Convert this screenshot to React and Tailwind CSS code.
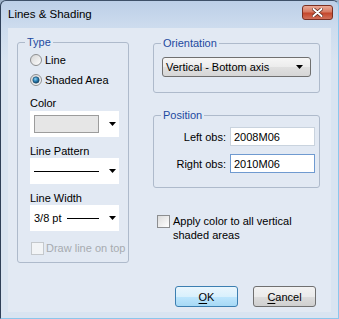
function Arrow() {
  return (
    <svg width="7" height="4" viewBox="0 0 7 4" className="shrink-0">
      <polygon points="0,0 7,0 3.5,4" fill="#000" />
    </svg>
  );
}

function Radio({ checked }) {
  return (
    <svg width="12" height="12" viewBox="0 0 12 12" className="shrink-0">
      <defs>
        <linearGradient id={checked ? 'rfa' : 'rfb'} x1="0" y1="0" x2="1" y2="1">
          <stop offset="0" stopColor="#d4d4d4" />
          <stop offset="1" stopColor="#ffffff" />
        </linearGradient>
        <radialGradient id="rdot" cx="0.4" cy="0.35" r="0.7">
          <stop offset="0" stopColor="#8fd3f5" />
          <stop offset="0.5" stopColor="#2a7fb3" />
          <stop offset="1" stopColor="#0d3e5e" />
        </radialGradient>
      </defs>
      <circle cx="6" cy="6" r="5.5" fill={checked ? 'url(#rfa)' : 'url(#rfb)'} stroke="#8c8e90" />
      {checked && <circle cx="6" cy="6" r="3.2" fill="url(#rdot)" stroke="#1d4a69" strokeWidth="0.6" />}
    </svg>
  );
}

function Check({ disabled }) {
  return (
    <div className={`h-[13px] w-[13px] shrink-0 border ${disabled ? 'border-[#c4c8cc] bg-[#f2f4f6]' : 'border-[#8c8e90] bg-[linear-gradient(135deg,#dcdcdc,#ffffff)]'}`} />
  );
}

function Group({ title, className, children }) {
  return (
    <fieldset className={`rounded-[3px] border border-[#aebacb] ${className}`}>
      <legend className="ml-[7px] px-[2px] text-[#1d4aa0]">{title}</legend>
      {children}
    </fieldset>
  );
}

function WhiteCombo({ children }) {
  return (
    <div className="flex h-[26px] w-[89px] items-center bg-white pl-[4px] pr-[3px]">
      <div className="flex flex-1 items-center">{children}</div>
      <div className="ml-[10px]">
        <Arrow />
      </div>
    </div>
  );
}

function Button({ label, first, isDefault }) {
  return (
    <button
      className={`flex h-[21px] w-[63px] items-center justify-center rounded-[3px] border ${
        isDefault
          ? 'border-[#3c7fb1] bg-[linear-gradient(#eaf6fd,#d9f0fc_50%,#bee6fd_50%,#a7d9f5)]'
          : 'border-[#707070] bg-[linear-gradient(#f2f2f2,#ebebeb_50%,#dddddd_50%,#cfcfcf)]'
      }`}
    >
      <span className="underline underline-offset-2">{first}</span>
      {label}
    </button>
  );
}

export default function App() {
  return (
    <div className="h-[319px] w-[339px] bg-[#9fb3ca] font-['Liberation_Sans',Arial,sans-serif] text-[11px] leading-[14px] text-black">
      <div className="flex h-full flex-col rounded-t-[6px] border border-b-[#8cc6ec] border-l-[#2f4058] border-r-[#8cc6ec] border-t-[#3e5068] bg-[linear-gradient(#bccfe7,#cddcee_26px,#d9e4f1_60px,#d9e4f1)]">
        {/* title bar */}
        <div className="flex h-[27px] shrink-0 items-start justify-between">
          <div className="pl-[7px] pt-[6px] text-[11.5px] leading-[15px]">Lines &amp; Shading</div>
          <div className="mr-[5px] mt-[4px] flex h-[15px] w-[31px] items-center justify-center rounded-[3px] border border-[#7a2f22] bg-[linear-gradient(#eaa996,#d77a63_45%,#c4472c_55%,#d2705a)]">
            <svg width="11" height="9" viewBox="0 0 11 9">
              <path d="M1.5 1 L9.5 8 M9.5 1 L1.5 8" stroke="#5a2418" strokeWidth="3.4" strokeLinecap="round" />
              <path d="M1.5 1 L9.5 8 M9.5 1 L1.5 8" stroke="#ffffff" strokeWidth="2" strokeLinecap="round" />
            </svg>
          </div>
        </div>

        {/* client */}
        <div className="mb-[6px] ml-[7px] mr-[7px] flex flex-1 flex-col bg-[#e2e9f3]">
          <div className="flex items-start gap-[24px] pl-[9px] pt-[7px]">
            <Group title="Type" className="h-[228px] w-[112px]">
              <div className="pl-[12px] pt-[1px]">
                <div className="flex h-[20px] items-center gap-[3px]">
                  <Radio />
                  <span>Line</span>
                </div>
                <div className="flex h-[20px] items-center gap-[3px]">
                  <Radio checked />
                  <span>Shaded Area</span>
                </div>
                <div className="mt-[6px]">Color</div>
                <div className="mt-[1px]">
                  <WhiteCombo>
                    <div className="h-[18px] w-[65px] border border-[#9c9c9c] bg-[#e6e6e6]" />
                  </WhiteCombo>
                </div>
                <div className="mt-[7px]">Line Pattern</div>
                <WhiteCombo>
                  <div className="h-px w-[65px] bg-black" />
                </WhiteCombo>
                <div className="mt-[7px]">Line Width</div>
                <WhiteCombo>
                  <span className="w-[33px]">3/8 pt</span>
                  <div className="h-px w-[32px] bg-black" />
                </WhiteCombo>
                <div className="mt-[10px] flex items-center gap-[2px] pl-[1px]">
                  <Check disabled />
                  <span className="text-[#a7abb0]">Draw line on top</span>
                </div>
              </div>
            </Group>

            <div className="flex w-[167px] flex-col">
              <Group title="Orientation" className="mt-[1px] h-[57px]">
                <div className="pl-[8px] pt-[7px]">
                  <div className="flex h-[20px] w-[149px] items-center justify-between rounded-[3px] border border-[#707070] bg-[linear-gradient(#f6f6f6,#ececec_50%,#e0e0e0_50%,#d6d6d6)] pl-[3px] pr-[7px]">
                    <span>Vertical - Bottom axis</span>
                    <Arrow />
                  </div>
                </div>
              </Group>

              <Group title="Position" className="mt-[15px] h-[80px]">
                <div className="flex flex-col gap-[8px] pr-[4px] pt-[5px]">
                  <div className="flex items-center justify-end gap-[4px]">
                    <span>Left obs:</span>
                    <input
                      readOnly
                      value="2008M06"
                      className="h-[19px] w-[85px] border border-[#c9d3de] bg-white px-[3px] outline-none"
                    />
                  </div>
                  <div className="flex items-center justify-end gap-[4px]">
                    <span>Right obs:</span>
                    <input
                      readOnly
                      value="2010M06"
                      className="h-[19px] w-[85px] border border-[#6f9ad0] bg-white px-[3px] outline-none"
                    />
                  </div>
                </div>
              </Group>

              <div className="mt-[26px] flex items-start gap-[3px] pl-[4px]">
                <div className="mt-[1px]">
                  <Check />
                </div>
                <span>
                  Apply color to all vertical
                  <br />
                  shaded areas
                </span>
              </div>
            </div>
          </div>

          <div className="mt-[23px] flex justify-end gap-[15px] pr-[15px]">
            <Button first="O" label="K" isDefault />
            <Button first="C" label="ancel" />
          </div>
        </div>
      </div>
    </div>
  );
}
